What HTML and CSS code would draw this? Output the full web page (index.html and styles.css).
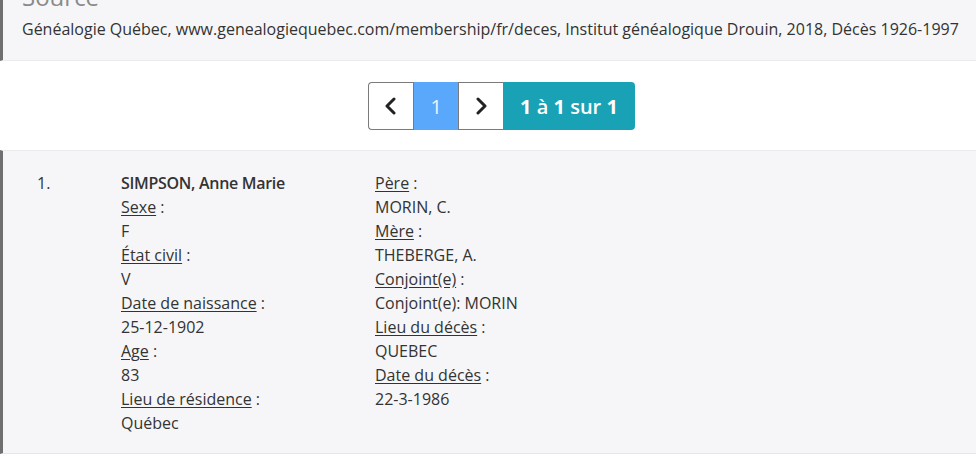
FILE: index.html
```html
<!DOCTYPE html>
<html lang="fr">
<head>
<meta charset="utf-8">
<title>Décès</title>
<link rel="stylesheet" href="styles.css">
</head>
<body>
<section class="source">
  <h3 class="source-title">Source</h3>
  <p class="source-text">Généalogie Québec, www.genealogiequebec.com/membership/fr/deces, Institut généalogique Drouin, 2018, Décès 1926-1997</p>
</section>

<nav class="pager">
  <a class="pg pg-prev" href="#"><svg width="14" height="18" viewBox="0 0 14 18"><polyline points="10,2 3,9 10,16" fill="none" stroke="#222" stroke-width="3" stroke-linecap="round" stroke-linejoin="round"/></svg></a>
  <span class="pg pg-active">1</span>
  <a class="pg pg-next" href="#"><svg width="14" height="18" viewBox="0 0 14 18"><polyline points="4,2 11,9 4,16" fill="none" stroke="#222" stroke-width="3" stroke-linecap="round" stroke-linejoin="round"/></svg></a>
  <span class="pg-count"><b>1</b> à <b>1</b> sur <b>1</b></span>
</nav>

<section class="record">
  <div class="rec-num">1.</div>
  <div class="rec-col">
    <div class="name">SIMPSON, Anne Marie</div>
    <div><u>Sexe</u> :</div>
    <div>F</div>
    <div><u>État civil</u> :</div>
    <div>V</div>
    <div><u>Date de naissance</u> :</div>
    <div>25-12-1902</div>
    <div><u>Age</u> :</div>
    <div>83</div>
    <div><u>Lieu de résidence</u> :</div>
    <div>Québec</div>
  </div>
  <div class="rec-col">
    <div><u>Père</u> :</div>
    <div>MORIN, C.</div>
    <div><u>Mère</u> :</div>
    <div>THEBERGE, A.</div>
    <div><u>Conjoint(e)</u> :</div>
    <div>Conjoint(e): MORIN</div>
    <div><u>Lieu du décès</u> :</div>
    <div>QUEBEC</div>
    <div><u>Date du décès</u> :</div>
    <div>22-3-1986</div>
  </div>
</section>
</body>
</html>
```

FILE: styles.css
```css
html, body {
  margin: 0;
  padding: 0;
  background: #ffffff;
}
body {
  font-family: "Open Sans", "Noto Sans", sans-serif;
  font-size: 16px;
  color: #333333;
  overflow: hidden;
}
.source {
  background: #f6f6f8;
  border-left: 3px solid #6f6f6f;
  border-bottom: 1px solid #ebebee;
  padding: 0 0 0 19px;
  height: 60px;
  overflow: hidden;
}
.source-title {
  margin: -18px 0 0 0;
  font-size: 24px;
  font-weight: 400;
  line-height: 30px;
  color: #8a8a8a;
}
.source-text {
  margin: 7px 0 0 0;
  line-height: 20px;
  white-space: nowrap;
}
.pager {
  display: flex;
  justify-content: center;
  margin: 21px 0 20px 27px;
  height: 48px;
}
.pg {
  display: flex;
  align-items: center;
  justify-content: center;
  width: 45px;
  height: 48px;
  box-sizing: border-box;
  text-decoration: none;
  font-size: 20px;
}
.pg-prev {
  border: 1px solid #7a7a7a;
  border-right: none;
  border-radius: 4px 0 0 4px;
  background: #ffffff;
}
.pg-active {
  background: #5aa8fb;
  color: #eaf4ff;
  border-left: 1px solid #7a7a7a;
}
.pg-next {
  background: #ffffff;
  border-top: 1px solid #7a7a7a;
  border-bottom: 1px solid #7a7a7a;
  border-left: 1px solid #7a7a7a;
}
.pg-count {
  display: flex;
  align-items: center;
  padding: 0 17px;
  height: 48px;
  background: #19a2b6;
  color: #ffffff;
  font-size: 20px;
  font-weight: 600;
  border-radius: 0 4px 4px 0;
  white-space: pre;
}
.pg-count b {
  font-weight: 700;
}
.record {
  display: grid;
  grid-template-columns: 84px 254px 1fr;
  background: #f6f6f8;
  border-left: 3px solid #6f6f6f;
  border-top: 1px solid #ebebee;
  border-bottom: 1px solid #e6e6e9;
  padding: 20px 0 18px 34px;
  line-height: 24px;
}
.name {
  font-weight: 600;
  letter-spacing: -0.3px;
}
u {
  text-decoration: underline;
  text-underline-offset: 2px;
}
```
